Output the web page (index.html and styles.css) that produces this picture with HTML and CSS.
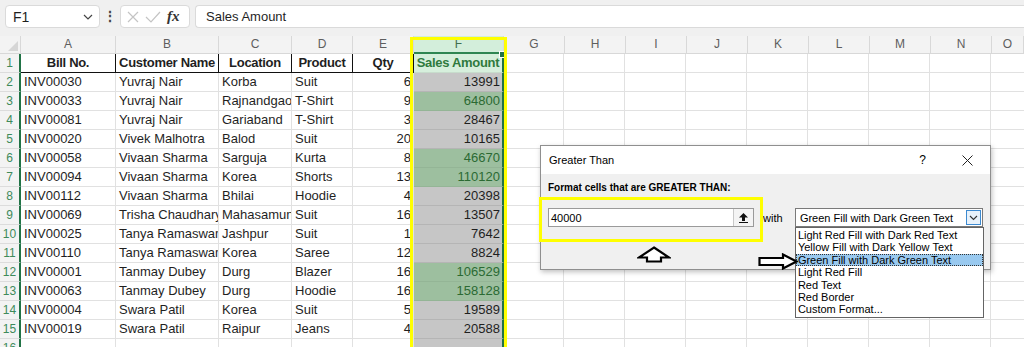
FILE: index.html
```html
<!DOCTYPE html>
<html lang="en">
<head>
    <meta charset="UTF-8">
    <title>Greater Than - Conditional Formatting</title>
    <link rel="stylesheet" href="styles.css">
</head>
<body>
<!-- formula bar -->
<div class="toolbar">
    <div class="namebox">
        <span>F1</span>
        <svg class="chev" width="10" height="6" viewBox="0 0 10 6"><path d="M1 1l4 4 4-4" fill="none" stroke="#444" stroke-width="1.2"/></svg>
    </div>
    <span class="dots">&#8942;</span>
    <div class="fxbox">
        <svg width="12" height="12" viewBox="0 0 12 12"><path d="M1 1l10 10M11 1L1 11" stroke="#c4c4c4" stroke-width="1.2"/></svg>
        <svg width="16" height="12" viewBox="0 0 16 12"><path d="M1 6l5 5L15 1" fill="none" stroke="#c4c4c4" stroke-width="1.2"/></svg>
        <span class="fx">fx</span>
    </div>
    <div class="formula">Sales Amount</div>
</div>

<!-- sheet -->
<div class="sheet">
    <div class="row colhead">
        <div class="corner"></div>
        <div>A</div><div>B</div><div>C</div><div>D</div><div>E</div><div class="on">F</div>
        <div>G</div><div>H</div><div>I</div><div>J</div><div>K</div><div>L</div><div>M</div><div>N</div><div>O</div>
    </div>
    <div class="row head">
        <div class="rh">1</div>
        <div>Bill No.</div><div>Customer Name</div><div>Location</div><div>Product</div><div>Qty</div>
        <div class="f active">Sales Amount</div><div class="rest"></div>
    </div>
    <div class="row"><div class="rh">2</div><div>INV00030</div><div>Yuvraj Nair</div><div>Korba</div><div>Suit</div><div class="n">6</div><div class="f n">13991</div><div class="rest"></div></div>
    <div class="row"><div class="rh">3</div><div>INV00033</div><div>Yuvraj Nair</div><div>Rajnandgaon</div><div>T-Shirt</div><div class="n">9</div><div class="f n hit">64800</div><div class="rest"></div></div>
    <div class="row"><div class="rh">4</div><div>INV00081</div><div>Yuvraj Nair</div><div>Gariaband</div><div>T-Shirt</div><div class="n">3</div><div class="f n">28467</div><div class="rest"></div></div>
    <div class="row"><div class="rh">5</div><div>INV00020</div><div>Vivek Malhotra</div><div>Balod</div><div>Suit</div><div class="n">20</div><div class="f n">10165</div><div class="rest"></div></div>
    <div class="row"><div class="rh">6</div><div>INV00058</div><div>Vivaan Sharma</div><div>Sarguja</div><div>Kurta</div><div class="n">8</div><div class="f n hit">46670</div><div class="rest"></div></div>
    <div class="row"><div class="rh">7</div><div>INV00094</div><div>Vivaan Sharma</div><div>Korea</div><div>Shorts</div><div class="n">13</div><div class="f n hit">110120</div><div class="rest"></div></div>
    <div class="row"><div class="rh">8</div><div>INV00112</div><div>Vivaan Sharma</div><div>Bhilai</div><div>Hoodie</div><div class="n">4</div><div class="f n">20398</div><div class="rest"></div></div>
    <div class="row"><div class="rh">9</div><div>INV00069</div><div>Trisha Chaudhary</div><div>Mahasamund</div><div>Suit</div><div class="n">16</div><div class="f n">13507</div><div class="rest"></div></div>
    <div class="row"><div class="rh">10</div><div>INV00025</div><div>Tanya Ramaswamy</div><div>Jashpur</div><div>Suit</div><div class="n">1</div><div class="f n">7642</div><div class="rest"></div></div>
    <div class="row"><div class="rh">11</div><div>INV00110</div><div>Tanya Ramaswamy</div><div>Korea</div><div>Saree</div><div class="n">12</div><div class="f n">8824</div><div class="rest"></div></div>
    <div class="row"><div class="rh">12</div><div>INV00001</div><div>Tanmay Dubey</div><div>Durg</div><div>Blazer</div><div class="n">16</div><div class="f n hit">106529</div><div class="rest"></div></div>
    <div class="row"><div class="rh">13</div><div>INV00063</div><div>Tanmay Dubey</div><div>Durg</div><div>Hoodie</div><div class="n">16</div><div class="f n hit">158128</div><div class="rest"></div></div>
    <div class="row"><div class="rh">14</div><div>INV00004</div><div>Swara Patil</div><div>Korea</div><div>Suit</div><div class="n">5</div><div class="f n">19589</div><div class="rest"></div></div>
    <div class="row"><div class="rh">15</div><div>INV00019</div><div>Swara Patil</div><div>Raipur</div><div>Jeans</div><div class="n">4</div><div class="f n">20588</div><div class="rest"></div></div>
    <div class="row"><div class="rh">16</div><div></div><div></div><div></div><div></div><div></div><div class="f"></div><div class="rest"></div></div>
</div>

<!-- Greater Than dialog -->
<div class="dialog">
    <div class="dlg-title">
        <span>Greater Than</span>
        <span class="help">?</span>
        <svg class="close" width="11" height="11" viewBox="0 0 11 11"><path d="M0.5 0.5l10 10M10.5 0.5l-10 10" stroke="#222" stroke-width="1"/></svg>
    </div>
    <div class="dlg-body">
        <div class="dlg-label">Format cells that are GREATER THAN:</div>
        <div class="dlg-row">
            <div class="input">
                <span>40000</span>
                <span class="pick"><svg width="9" height="10" viewBox="0 0 9 10"><path d="M4.5 0L9 4.5H6V8H3V4.5H0z" fill="#111"/><path d="M0 9.5h9" stroke="#111"/></svg></span>
            </div>
            <span class="with">with</span>
            <div class="select">
                <span>Green Fill with Dark Green Text</span>
                <span class="drop"><svg width="9" height="6" viewBox="0 0 9 6"><path d="M1 1l3.5 3.5L8 1" fill="none" stroke="#333" stroke-width="1.1"/></svg></span>
                <ul class="list">
                    <li>Light Red Fill with Dark Red Text</li>
                    <li>Yellow Fill with Dark Yellow Text</li>
                    <li class="cur">Green Fill with Dark Green Text</li>
                    <li>Light Red Fill</li>
                    <li>Red Text</li>
                    <li>Red Border</li>
                    <li>Custom Format...</li>
                </ul>
            </div>
        </div>
    </div>
</div>

<!-- annotations -->
<div class="mark mark-col"></div>
<div class="mark mark-input"></div>
<svg class="arrow-up" width="34" height="17" viewBox="0 0 34 17"><path d="M17 1.5L32 11.5H24V15.5H10V11.5H2Z" fill="#fff" stroke="#000" stroke-width="2.2" stroke-linejoin="miter"/></svg>
<svg class="arrow-right" width="40" height="17" viewBox="0 0 40 17"><path d="M1.5 5H25V1.5L38.5 8.5L25 15.5V12H1.5Z" fill="#fff" stroke="#000" stroke-width="2.2"/></svg>
</body>
</html>
```
FILE: styles.css
```css
body{
    margin: 0;
    width: 1024px;
    height: 347px;
    overflow: hidden;
    background: #fff;
    font-family: "Liberation Sans", Arial, sans-serif;
    color: #1f1f1f;
    position: relative;
}
/* formula bar */
.toolbar{
    height: 36px;
    box-sizing: border-box;
    padding: 5px 0 0 5px;
    display: flex;
    align-items: flex-start;
    background: #f0f0f0;
    font-size: 13px;
}
.namebox{
    width: 95px;
    height: 23px;
    box-sizing: border-box;
    display: flex;
    align-items: center;
    justify-content: space-between;
    padding: 0 6px 0 7px;
    background: #fff;
    border: 1px solid #dadada;
    border-radius: 4px;
    font-size: 14px;
}
.dots{
    width: 20px;
    text-align: center;
    line-height: 23px;
    font-size: 14px;
    font-weight: bold;
    color: #444;
}
.fxbox{
    width: 70px;
    height: 23px;
    box-sizing: border-box;
    display: flex;
    align-items: center;
    gap: 6px;
    padding-left: 6px;
    background: #fff;
    border: 1px solid #dadada;
    border-radius: 4px;
}
.fx{
    font-family: "Liberation Serif", serif;
    font-style: italic;
    font-weight: bold;
    font-size: 15px;
    color: #333;
}
.formula{
    flex: 1;
    height: 23px;
    box-sizing: border-box;
    margin-left: 5px;
    padding-left: 10px;
    line-height: 21px;
    background: #fff;
    border: 1px solid #dadada;
    border-right: 0;
    border-radius: 4px 0 0 4px;
}
/* sheet grid */
.row{
    display: grid;
    grid-template-columns: 21px 95px 103px 73px 61px 61px 90px 1fr;
    height: 19px;
    font-size: 13px;
    line-height: 18px;
}
.row > div{
    box-sizing: border-box;
    border-right: 1px solid #e1e1e1;
    border-bottom: 1px solid #e1e1e1;
    padding: 0 3px;
    white-space: nowrap;
    overflow: hidden;
}
.row .n{
    text-align: right;
    padding-right: 2px;
}
.row .rest{
    border-right: 0;
    background: repeating-linear-gradient(to right, #fff 0 60px, #e1e1e1 60px 61px);
    background-position: -1px 0;
}
.colhead{
    grid-template-columns: 21px 95px 103px 73px 61px 61px 90px 61px 61px 61px 61px 61px 61px 61px 61px 1fr;
    height: 18px;
    background: #f3f3f3;
    color: #5e5e5e;
    font-size: 12px;
    line-height: 17px;
    text-align: center;
}
.colhead > div{
    border-color: #d8d8d8;
}
.colhead .on{
    background: #d3eedb;
    color: #3f6e50;
    border-bottom: 2px solid #2f8552;
}
.corner{
    position: relative;
}
.corner:after{
    content: '';
    position: absolute;
    right: 2px;
    bottom: 2px;
    border-left: 10px solid transparent;
    border-bottom: 10px solid #d6d6d6;
}
.row .rh{
    padding: 0;
    text-align: center;
    background: #f3f3f3;
    color: #3e8a5a;
    font-size: 12px;
    border-right: 2px solid #217346;
    border-bottom-color: #dcdcdc;
}
.head > div{
    padding: 0;
    font-weight: bold;
    letter-spacing: -0.3px;
    text-align: center;
    border-right-color: #111;
    border-bottom-color: #111;
}
.head .rh{
    font-weight: normal;
    letter-spacing: 0;
    border-right-color: #217346;
    border-bottom-color: #dcdcdc;
}
.head .rest{
    border-bottom-color: #e1e1e1;
}
.row .f{
    background: #c6c6c6;
    border-right: 2px solid #217346;
    border-bottom-color: #b5b5b5;
}
.row .hit{
    background: #9dbf9f;
    color: #2b6a33;
    border-bottom-color: #94b596;
}
.row .active{
    background: #d6efdc;
    color: #2f7a3e;
    border-bottom-color: #c7dccc;
    position: relative;
    overflow: visible;
}
.active:after{
    content: '';
    position: absolute;
    right: -4px;
    top: -3px;
    width: 5px;
    height: 5px;
    background: #217346;
    border: 1px solid #fff;
}
/* dialog */
.dialog{
    position: absolute;
    left: 540px;
    top: 145px;
    width: 451px;
    height: 125px;
    box-sizing: border-box;
    background: #f0f0f0;
    border: 1px solid #8f8f8f;
    box-shadow: 1px 2px 5px rgba(0,0,0,.25);
    font-size: 11px;
    color: #000;
}
.dlg-title{
    height: 28px;
    display: flex;
    align-items: center;
    padding-left: 8px;
    background: #fff;
    font-size: 11px;
}
.help{
    margin-left: auto;
    font-size: 12px;
}
.close{
    margin: 0 17px 0 36px;
}
.dlg-body{
    padding: 8px 7px 0;
}
.dlg-label{
    font-weight: bold;
    font-size: 10px;
    line-height: 12px;
}
.dlg-row{
    margin-top: 14px;
    display: flex;
    align-items: center;
}
.input{
    width: 207px;
    height: 19px;
    box-sizing: border-box;
    display: flex;
    align-items: center;
    justify-content: space-between;
    padding-left: 2px;
    background: #fff;
    border: 1px solid #9a9a9a;
}
.pick{
    width: 19px;
    height: 17px;
    display: flex;
    align-items: center;
    justify-content: center;
    border-left: 1px solid #c8c8c8;
    background: #f4f4f4;
}
.with{
    margin-left: 9px;
    width: 32px;
}
.select{
    position: relative;
    width: 189px;
    height: 19px;
    box-sizing: border-box;
    display: flex;
    align-items: center;
    justify-content: space-between;
    padding-left: 4px;
    background: #fff;
    border: 1px solid #7a7a7a;
}
.drop{
    width: 15px;
    height: 15px;
    margin-right: 1px;
    box-sizing: border-box;
    display: flex;
    align-items: center;
    justify-content: center;
    border: 1px solid #3d8ad0;
    background: #e8f2fb;
}
.list{
    position: absolute;
    left: -1px;
    top: 18px;
    width: 189px;
    margin: 0;
    padding: 1px 0;
    list-style: none;
    box-sizing: border-box;
    background: #fff;
    border: 1px solid #646464;
    z-index: 2;
}
.list li{
    height: 12.4px;
    line-height: 12px;
    padding-left: 2px;
    box-sizing: border-box;
    white-space: nowrap;
}
.list .cur{
    background: #99c9ef;
    outline: 1px dotted #333;
    outline-offset: -1px;
}
/* annotations */
.mark{
    position: absolute;
    border: 3px solid #ffff00;
    box-sizing: border-box;
}
.mark-col{
    left: 410px;
    top: 37px;
    width: 97px;
    height: 320px;
}
.mark-input{
    left: 539px;
    top: 197px;
    width: 224px;
    height: 45px;
}
.arrow-up{
    position: absolute;
    left: 637px;
    top: 246px;
}
.arrow-right{
    position: absolute;
    left: 758px;
    top: 253px;
    z-index: 3;
}
```
